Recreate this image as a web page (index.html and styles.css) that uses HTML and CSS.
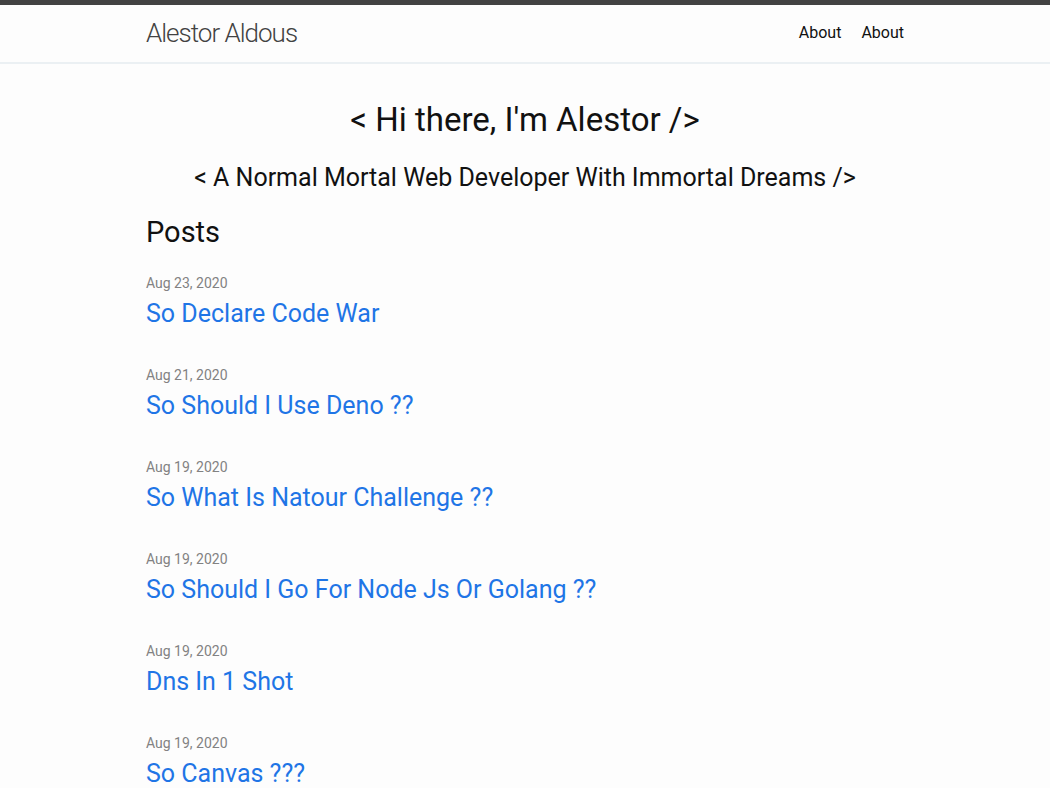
FILE: index.html
```
<!DOCTYPE html>
<html lang="en">
<head>
<meta charset="utf-8">
<meta name="viewport" content="width=device-width, initial-scale=1">
<title>Alestor Aldous</title>
<link rel="stylesheet" href="styles.css">
</head>
<body>
<header class="site-header">
  <div class="wrapper header-row">
    <a class="site-title" href="#">Alestor Aldous</a>
    <nav class="site-nav">
      <a class="page-link" href="#">About</a>
      <a class="page-link" href="#">About</a>
    </nav>
  </div>
</header>
<main class="page-content">
  <div class="wrapper">
    <h1 class="greeting">&lt; Hi there, I'm Alestor /&gt;</h1>
    <h2 class="tagline">&lt; A Normal Mortal Web Developer With Immortal Dreams /&gt;</h2>
    <h2 class="post-list-heading">Posts</h2>
    <ul class="post-list">
      <li><time class="post-meta" datetime="2020-08-23">Aug 23, 2020</time><h3 class="post-title"><a class="post-link" href="#">So Declare Code War</a></h3></li>
      <li><time class="post-meta" datetime="2020-08-21">Aug 21, 2020</time><h3 class="post-title"><a class="post-link" href="#">So Should I Use Deno ??</a></h3></li>
      <li><time class="post-meta" datetime="2020-08-19">Aug 19, 2020</time><h3 class="post-title"><a class="post-link" href="#">So What Is Natour Challenge ??</a></h3></li>
      <li><time class="post-meta" datetime="2020-08-19">Aug 19, 2020</time><h3 class="post-title"><a class="post-link" href="#">So Should I Go For Node Js Or Golang ??</a></h3></li>
      <li><time class="post-meta" datetime="2020-08-19">Aug 19, 2020</time><h3 class="post-title"><a class="post-link" href="#">Dns In 1 Shot</a></h3></li>
      <li><time class="post-meta" datetime="2020-08-19">Aug 19, 2020</time><h3 class="post-title"><a class="post-link" href="#">So Canvas ???</a></h3></li>
    </ul>
  </div>
</main>
</body>
</html>
```
FILE: styles.css
```
* { box-sizing: border-box; }
body {
  margin: 0;
  background: #fdfdfd;
  color: #111;
  font: 400 16px/24px Roboto, sans-serif;
}
h1, h2, h3, ul { margin: 0; padding: 0; font-weight: 400; }
a { text-decoration: none; }
.wrapper {
  max-width: 800px;
  margin: 0 auto;
  padding: 0 21px;
}
.site-header {
  border-top: 5px solid #424242;
  border-bottom: 2px solid #ebf0f3;
}
.header-row {
  display: flex;
  justify-content: space-between;
  align-items: center;
  min-height: 57px;
  padding-bottom: 2px;
}
.site-title {
  color: #424242;
  font-size: 26px;
  font-weight: 300;
  letter-spacing: -1px;
}
.site-nav { display: flex; gap: 20px; }
.page-link { color: #111; }
.page-content { padding: 32px 0; }
.greeting {
  font-size: 33px;
  line-height: 48px;
  text-align: center;
}
.tagline {
  margin-top: 16px;
  font-size: 25px;
  line-height: 36px;
  text-align: center;
}
.post-list-heading {
  margin-top: 16px;
  font-size: 29px;
  line-height: 40px;
}
.post-list {
  margin-top: 19px;
  list-style: none;
}
.post-list li { margin-bottom: 30px; }
.post-meta {
  display: block;
  color: #828282;
  font-size: 14px;
  line-height: 24px;
}
.post-title { font-size: 25px; line-height: 38px; }
.post-link { color: #1f75e6; }
```
